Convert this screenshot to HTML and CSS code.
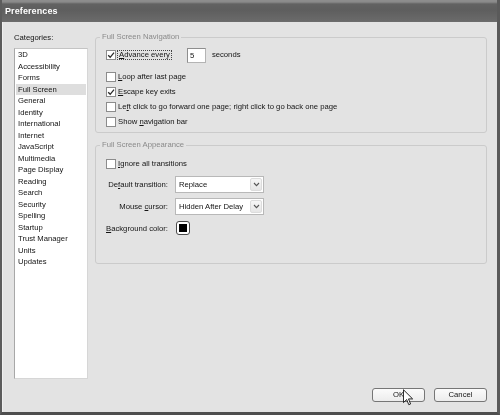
FILE: index.html
```html
<!DOCTYPE html>
<html>
<head>
<meta charset="utf-8">
<title>Preferences</title>
<link rel="stylesheet" href="styles.css">
</head>
<body>
<div class="window">
  <div class="titlebar">Preferences</div>
  <div class="client">
    <div class="main">
      <div class="sidebar">
        <div class="cat-label">Categories:</div>
        <ul class="catlist">
          <li>3D</li>
          <li>Accessibility</li>
          <li>Forms</li>
          <li class="selected">Full Screen</li>
          <li>General</li>
          <li>Identity</li>
          <li>International</li>
          <li>Internet</li>
          <li>JavaScript</li>
          <li>Multimedia</li>
          <li>Page Display</li>
          <li>Reading</li>
          <li>Search</li>
          <li>Security</li>
          <li>Spelling</li>
          <li>Startup</li>
          <li>Trust Manager</li>
          <li>Units</li>
          <li>Updates</li>
        </ul>
      </div>
      <div class="content">
        <fieldset class="group group-nav">
          <legend>Full Screen Navigation</legend>
          <div class="row row-first">
            <span class="cb checked"><svg viewBox="0 0 10 10" width="10" height="10"><path d="M2.2 5.2 L4.2 7.3 L8 2.6" fill="none" stroke="#2a2a2a" stroke-width="1.3"/></svg></span>
            <span class="focus"><u>A</u>dvance every</span>
            <span class="num">5</span>
            <span class="secs">seconds</span>
          </div>
          <div class="row">
            <span class="cb"></span>
            <span class="lbl"><u>L</u>oop after last page</span>
          </div>
          <div class="row">
            <span class="cb checked"><svg viewBox="0 0 10 10" width="10" height="10"><path d="M2.2 5.2 L4.2 7.3 L8 2.6" fill="none" stroke="#2a2a2a" stroke-width="1.3"/></svg></span>
            <span class="lbl"><u>E</u>scape key exits</span>
          </div>
          <div class="row">
            <span class="cb"></span>
            <span class="lbl">Le<u>f</u>t click to go forward one page; right click to go back one page</span>
          </div>
          <div class="row">
            <span class="cb"></span>
            <span class="lbl">Show <u>n</u>avigation bar</span>
          </div>
        </fieldset>
        <fieldset class="group group-app">
          <legend>Full Screen Appearance</legend>
          <div class="row">
            <span class="cb"></span>
            <span class="lbl"><u>I</u>gnore all transitions</span>
          </div>
          <div class="form">
            <span class="flabel">De<u>f</u>ault transition:</span>
            <div class="select"><span>Replace</span><span class="arrow"><svg viewBox="0 0 7 5" width="7" height="5"><path d="M1 1 L3.5 3.6 L6 1" fill="none" stroke="#555" stroke-width="1.1"/></svg></span></div>
            <span class="flabel">Mouse <u>c</u>ursor:</span>
            <div class="select"><span>Hidden After Delay</span><span class="arrow"><svg viewBox="0 0 7 5" width="7" height="5"><path d="M1 1 L3.5 3.6 L6 1" fill="none" stroke="#555" stroke-width="1.1"/></svg></span></div>
            <span class="flabel"><u>B</u>ackground color:</span>
            <div class="swatch"><span></span></div>
          </div>
        </fieldset>
      </div>
    </div>
    <div class="footer">
      <button class="btn">OK</button>
      <button class="btn">Cancel</button>
    </div>
  </div>
  <svg class="cursor" viewBox="0 0 12 19" width="11" height="18"><path d="M0.5 0.5 L0.5 14.5 L4 11.2 L6.3 16.8 L8.3 16 L6 10.5 L10.5 10.5 Z" fill="#fff" stroke="#111" stroke-width="1"/></svg>
</div>
</body>
</html>
```

FILE: styles.css
```css
html, body {
  margin: 0;
  padding: 0;
  background: #e3e3e3;
}

body {
  font-family: "Liberation Sans", Arial, sans-serif;
  font-size: 7.7px;
  line-height: 10px;
  color: #141414;
}

.window {
  position: relative;
  width: 500px;
  height: 415px;
  box-sizing: border-box;
  display: flex;
  flex-direction: column;
  background: #e3e3e3;
  border-left: 2px solid #5c5c5c;
  border-right: 3px solid #5a5a5a;
  border-bottom: 3px solid #4e4e4e;
  overflow: hidden;
  filter: grayscale(1);
}

.titlebar {
  height: 22px;
  box-sizing: border-box;
  margin-left: -2px;
  margin-right: -3px;
  padding-left: 5px;
  background: linear-gradient(#8e8e8e 0px, #8a8a8a 2px, #626262 4px, #5e5e5e 10px, #6a6a6a 21px, #6e6e6e 22px);
  color: #ffffff;
  font-weight: bold;
  font-size: 9px;
  line-height: 22px;
  letter-spacing: 0.1px;
}

.client {
  flex: 1;
  display: flex;
  flex-direction: column;
  padding: 10px 10px 11px 11px;
  border-left: 1px solid #efefef;
}

.main {
  flex: 1;
  display: flex;
  gap: 7px;
  align-items: flex-start;
}

.sidebar {
  width: 74px;
  display: flex;
  flex-direction: column;
}

.cat-label {
  line-height: 11px;
  margin-bottom: 5px;
}

.catlist {
  list-style: none;
  margin: 0;
  padding: 0 1px;
  height: 331px;
  box-sizing: border-box;
  background: #ffffff;
  border: 1px solid #d6d6d6;
  border-left-color: #a8a8a8;
  border-top-color: #c4c4c4;
}

.catlist li {
  line-height: 11.5px;
  padding-left: 2px;
  white-space: nowrap;
}

.catlist li.selected {
  background: #dedede;
}

.content {
  flex: 1;
  display: flex;
  flex-direction: column;
}

.group {
  margin: 0;
  border: 1px solid #cbcbcb;
  border-radius: 3px;
  padding: 0 10px 0 10px;
  min-width: 0;
}

.group legend {
  color: #8a8a8a;
  padding: 0 2px;
  margin-left: -6px;
  line-height: 10px;
}

.group-nav {
  padding-top: 5px;
  padding-bottom: 3px;
  margin-bottom: 7px;
}

.group-app {
  padding-top: 6px;
  padding-bottom: 26px;
}

.row {
  display: flex;
  align-items: center;
  height: 15px;
  white-space: nowrap;
}

.row-first {
  height: 16px;
  margin-bottom: 6px;
}

.cb {
  width: 10px;
  height: 10px;
  box-sizing: border-box;
  border: 1px solid #8c8c8c;
  background: #ffffff;
  margin-right: 2px;
  flex: none;
  display: flex;
  align-items: center;
  justify-content: center;
}

.cb svg {
  display: block;
  flex: none;
}

.focus {
  border: 1px dotted #444;
  padding: 0 1px;
  line-height: 8px;
  margin-left: -1px;
}

.num {
  margin-left: 15px;
  width: 19px;
  height: 15px;
  box-sizing: border-box;
  background: #ffffff;
  border: 1px solid #b4b4b4;
  border-top-color: #8e8e8e;
  border-left-color: #8e8e8e;
  padding-left: 2px;
  line-height: 13px;
}

.secs {
  margin-left: 6px;
}

.form {
  display: grid;
  grid-template-columns: 62px 89px;
  column-gap: 7px;
  row-gap: 5px;
  align-items: center;
  margin-top: 5px;
}

.flabel {
  justify-self: end;
  white-space: nowrap;
}

.select {
  height: 17px;
  box-sizing: border-box;
  background: #ffffff;
  border: 1px solid #b8b8b8;
  display: flex;
  align-items: center;
  justify-content: space-between;
  padding-left: 3px;
  padding-right: 1px;
}

.arrow {
  width: 12px;
  height: 13px;
  box-sizing: border-box;
  border: 1px solid #dcdcdc;
  border-radius: 2px;
  background: linear-gradient(#f6f6f6, #e6e6e6);
  display: flex;
  align-items: center;
  justify-content: center;
}

.arrow svg {
  display: block;
}

.swatch {
  width: 14px;
  height: 14px;
  box-sizing: border-box;
  border: 1px solid #4a4a4a;
  border-radius: 3px;
  background: #ffffff;
  padding: 2px;
  margin-left: 1px;
  margin-top: 1px;
  margin-bottom: 2px;
}

.swatch span {
  display: block;
  width: 100%;
  height: 100%;
  background: #000000;
}

.footer {
  display: flex;
  justify-content: flex-end;
  gap: 9px;
  padding-top: 9px;
}

.btn {
  width: 53px;
  height: 14px;
  box-sizing: border-box;
  padding: 0;
  font-family: "Liberation Sans", Arial, sans-serif;
  font-size: 7.7px;
  line-height: 12px;
  color: #141414;
  background: linear-gradient(#fbfbfb, #ececec);
  border: 1px solid #767676;
  border-radius: 3px;
}

.cursor {
  position: absolute;
  left: 401px;
  top: 389px;
}
```
